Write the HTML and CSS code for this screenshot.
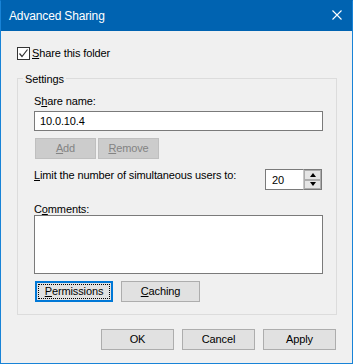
FILE: index.html
```html
<!DOCTYPE html>
<html>
<head>
<meta charset="utf-8">
<link rel="stylesheet" href="styles.css">
</head>
<body>
<div class="window">
  <div class="titlebar">
    <span class="title">Advanced Sharing</span>
    <svg class="close" width="10" height="10" viewBox="0 0 10 10"><path d="M0.5 0.5L9.5 9.5M9.5 0.5L0.5 9.5" stroke="#fff" stroke-width="1.1" fill="none"/></svg>
  </div>
  <div class="content">
    <div class="check-row">
      <span class="checkbox"><svg width="11" height="11" viewBox="0 0 11 11"><path d="M1.5 5.5L4 8.5L9.5 1.5" stroke="#333" stroke-width="1.2" fill="none"/></svg></span>
      <span class="check-label"><u>S</u>hare this folder</span>
    </div>
    <fieldset class="group">
      <legend>Settings</legend>
      <div class="group-inner">
        <div class="label first">S<u>h</u>are name:</div>
        <div class="textbox">10.0.10.4</div>
        <div class="btn-row small">
          <div class="btn disabled"><u>A</u>dd</div>
          <div class="btn disabled"><u>R</u>emove</div>
        </div>
        <div class="limit-row">
          <div class="label"><u>L</u>imit the number of simultaneous users to:</div>
          <div class="spinner">
            <div class="spin-box">20</div>
            <div class="spin-arrows">
              <div class="spin-btn up"><span class="tri-up"></span></div>
              <div class="spin-btn down"><span class="tri-down"></span></div>
            </div>
          </div>
        </div>
        <div class="label comments">C<u>o</u>mments:</div>
        <div class="textarea"></div>
        <div class="btn-row wide">
          <div class="btn default perm"><span class="focus"><u>P</u>ermissions</span></div>
          <div class="btn cach"><u>C</u>aching</div>
        </div>
      </div>
    </fieldset>
    <div class="footer">
      <div class="btn foot">OK</div>
      <div class="btn foot">Cancel</div>
      <div class="btn foot">Apply</div>
    </div>
  </div>
</div>
</body>
</html>
```

FILE: styles.css
```css
* { box-sizing: border-box; }
html, body { margin: 0; padding: 0; }
body {
  font-family: "Liberation Sans", Arial, sans-serif;
  font-size: 11px;
  letter-spacing: -0.12px;
  color: #000;
  background: #ffffff;
}
u { text-decoration: underline; text-underline-offset: 1px; }

.window {
  width: 353px;
  height: 364px;
  border: 1px solid #1883d7;
  border-top-color: #0063b1;
  background: #f0f0f0;
  display: flex;
  flex-direction: column;
}
.titlebar {
  flex: none;
  height: 30px;
  background: #0063b1;
  color: #fff;
  font-size: 12px;
  letter-spacing: -0.15px;
  display: flex;
  align-items: center;
  justify-content: space-between;
  padding: 0 10px 0 8px;
}
.close { display: block; margin-bottom: 2px; }

.content { padding: 16px 15px 0 16px; }

.check-row { display: flex; align-items: center; height: 13px; }
.checkbox {
  width: 13px; height: 13px;
  border: 1px solid #333;
  background: #fff;
  display: flex;
}
.checkbox svg { display: block; }
.check-label { margin-left: 2px; line-height: 13px; }

.group {
  margin: 10px 0 0 0;
  padding: 0 0 12px 5px;
  border: 1px solid #dcdcdc;
  width: 320px;
  min-width: 0;
}
.group legend { padding: 2px 2px 0; line-height: 14px; }
.group-inner { padding: 0 13px 0 11px; }

.label { line-height: 12px; white-space: nowrap; }
.label.first { margin-top: 9px; }

.textbox {
  margin-top: 4px;
  height: 20px;
  background: #fff;
  border: 1px solid #7a7a7a;
  padding: 1px 0 0 5px;
  line-height: 17px;
}

.btn-row { display: flex; margin-left: 1px; }
.btn-row.small { margin-top: 7px; gap: 2px; }
.btn-row.wide { margin-top: 7px; gap: 8px; }

.btn {
  height: 21px;
  background: #e1e1e1;
  border: 1px solid #adadad;
  display: flex;
  align-items: center;
  justify-content: center;
  line-height: 13px;
}
.btn.disabled {
  width: 61px;
  background: #cccccc;
  border-color: #bfbfbf;
  color: #838383;
}
.btn.perm { width: 78px; }
.btn.cach { width: 79px; }
.btn.default {
  border: 2px solid #0078d7;
  padding: 1px;
  align-items: stretch;
}
.btn .focus {
  flex: 1;
  border: 1px dotted #000;
  display: flex;
  align-items: center;
  justify-content: center;
}

.limit-row {
  margin-top: 10px;
  display: flex;
  justify-content: space-between;
  align-items: flex-start;
}
.spinner { display: flex; height: 21px; width: 57px; margin-right: 1px; }
.spin-box {
  width: 38px;
  height: 21px;
  background: #fff;
  border: 1px solid #7a7a7a;
  border-right: none;
  padding: 2px 0 0 6px;
  line-height: 16px;
}
.spin-arrows {
  width: 19px;
  height: 21px;
  display: flex;
  flex-direction: column;
  border: 1px solid #7a7a7a;
  border-left: 1px solid #c8c8c8;
  background: #fff;
}
.spin-btn {
  flex: 1;
  background: #e5e5e5;
  border: 1px solid #adadad;
  display: flex;
  align-items: center;
  justify-content: center;
}
.tri-up {
  width: 0; height: 0;
  border-left: 3.5px solid transparent;
  border-right: 3.5px solid transparent;
  border-bottom: 4px solid #000;
}
.tri-down {
  width: 0; height: 0;
  border-left: 3.5px solid transparent;
  border-right: 3.5px solid transparent;
  border-top: 4px solid #000;
}

.label.comments { margin-top: 13px; }
.textarea {
  height: 59px;
  background: #fff;
  border: 1px solid #7a7a7a;
}

.footer {
  margin-top: 14px;
  display: flex;
  justify-content: flex-end;
  gap: 8px;
  padding-right: 1px;
}
.btn.foot { width: 73px; }
```
